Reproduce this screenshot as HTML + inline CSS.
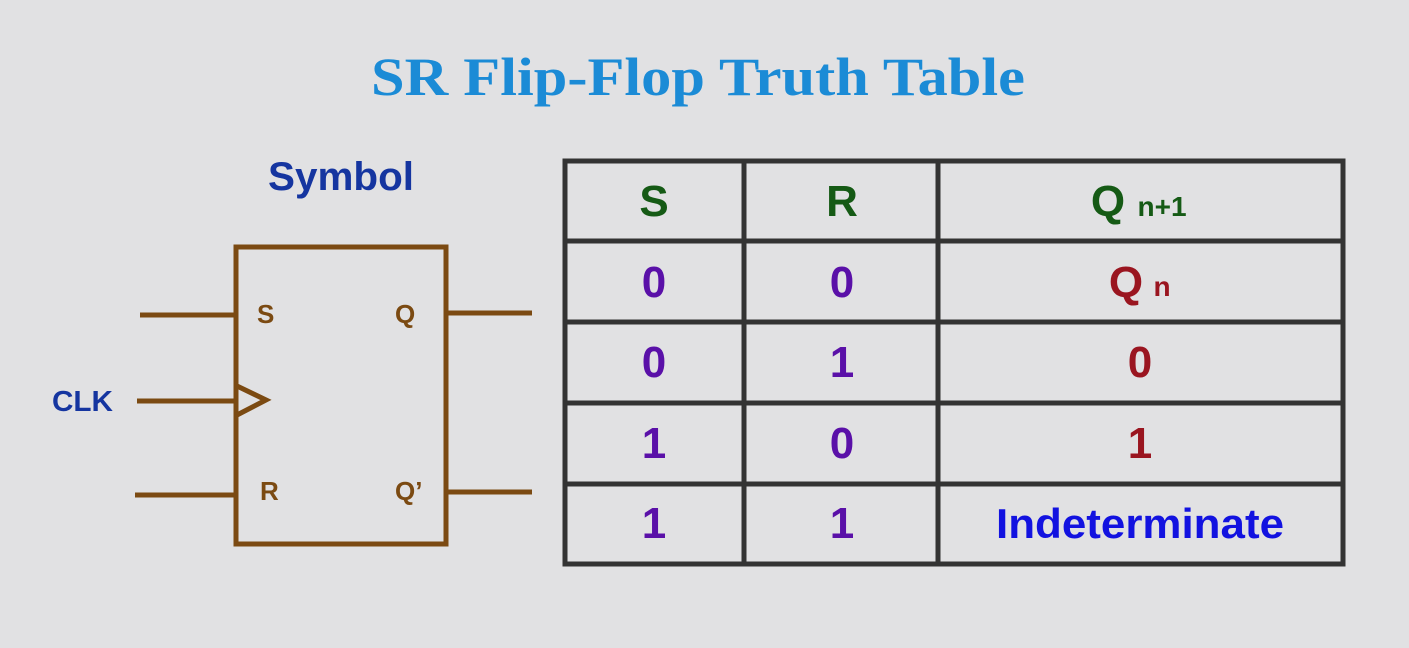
<!DOCTYPE html>
<html><head><style>
html,body{margin:0;padding:0;background:#e1e1e3;}
svg{display:block}
text{font-family:"Liberation Sans",sans-serif;font-weight:bold}
</style></head><body>
<svg width="1409" height="648" viewBox="0 0 1409 648">
<rect width="1409" height="648" fill="#e1e1e3"/>
<text x="698" y="95" text-anchor="middle" style="font-family:'Liberation Serif',serif" font-size="54" fill="#1b8bd6" textLength="654" lengthAdjust="spacingAndGlyphs">SR Flip-Flop Truth Table</text>
<text x="341" y="190" text-anchor="middle" font-size="40" fill="#1535a0" textLength="146" lengthAdjust="spacingAndGlyphs">Symbol</text>
<g stroke="#7b4a12" stroke-width="5" fill="none">
<rect x="236" y="247" width="210" height="297"/>
<line x1="140" y1="315" x2="236" y2="315"/>
<line x1="137" y1="401" x2="236" y2="401"/>
<line x1="135" y1="495" x2="236" y2="495"/>
<line x1="446" y1="313" x2="532" y2="313"/>
<line x1="446" y1="492" x2="532" y2="492"/>
<polyline points="237,386 266,400 237,415"/>
</g>
<g fill="#7b4a12" font-size="26">
<text x="257" y="323">S</text>
<text x="395" y="323">Q</text>
<text x="260" y="500">R</text>
<text x="395" y="500">Q’</text>
</g>
<text x="52" y="411" font-size="29" fill="#1535a0" textLength="61" lengthAdjust="spacingAndGlyphs">CLK</text>
<g stroke="#333" stroke-width="5" fill="none">
<rect x="565" y="161" width="778" height="403"/>
<line x1="744" y1="161" x2="744" y2="564"/>
<line x1="938" y1="161" x2="938" y2="564"/>
<line x1="565" y1="241" x2="1343" y2="241"/>
<line x1="565" y1="322" x2="1343" y2="322"/>
<line x1="565" y1="403" x2="1343" y2="403"/>
<line x1="565" y1="484" x2="1343" y2="484"/>
</g>
<g font-size="44" text-anchor="middle">
<g fill="#155a15">
<text x="654" y="216">S</text>
<text x="842" y="216">R</text>
<text x="1108" y="216">Q</text>
<text x="1162" y="216" font-size="28">n+1</text>
</g>
<g fill="#5a10a8">
<text x="654" y="297">0</text><text x="842" y="297">0</text>
<text x="654" y="377">0</text><text x="842" y="377">1</text>
<text x="654" y="458">1</text><text x="842" y="458">0</text>
<text x="654" y="538">1</text><text x="842" y="538">1</text>
</g>
<g fill="#9a1520">
<text x="1126" y="297">Q</text>
<text x="1162" y="296" font-size="28">n</text>
<text x="1140" y="377">0</text>
<text x="1140" y="458">1</text>
</g>
<text x="1140" y="538" fill="#1212e0" font-size="42" textLength="288" lengthAdjust="spacingAndGlyphs">Indeterminate</text>
</g>
</svg>
</body></html>
